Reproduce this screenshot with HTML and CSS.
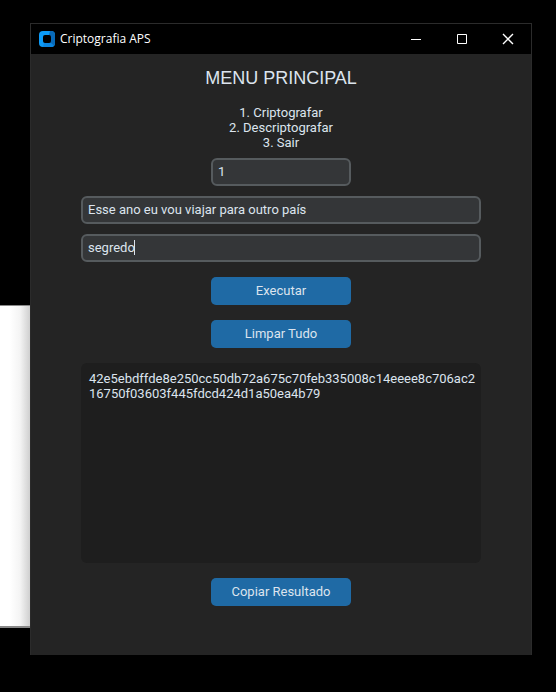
FILE: index.html
```html
<!DOCTYPE html>
<html lang="pt-BR">
<head>
<meta charset="utf-8">
<meta name="viewport" content="width=device-width, initial-scale=1">
<title>Criptografia APS</title>
<link rel="stylesheet" href="styles.css">
</head>
<body>
<div class="backdrop"></div>
<div class="window">
  <header class="titlebar">
    <svg class="app-icon" viewBox="0 0 16 16" aria-hidden="true">
      <rect width="16" height="16" rx="4" fill="#0c9bf8"/>
      <path fill="#0869b8" d="M11 0H12Q16 0 16 4V12Q16 16 12 16L10 12V4Z"/>
      <path fill="#0c86e0" d="M5 12H12L15 14.500Q14 16 12 16H4Z"/>
      <rect x="4" y="4" width="8" height="8" rx="2" fill="#000"/>
    </svg>
    <span class="title">Criptografia APS</span>
    <button class="control" type="button" aria-label="Minimizar">
      <svg viewBox="0 0 10 10"><path d="M0 5.500H10"/></svg>
    </button>
    <button class="control" type="button" aria-label="Maximizar">
      <svg viewBox="0 0 10 10"><path d="M.5.500H9.500V9.500H.5Z"/></svg>
    </button>
    <button class="control" type="button" aria-label="Fechar">
      <svg viewBox="0 0 10 10"><path class="cross" d="M0 0L10 10M10 0L0 10"/></svg>
    </button>
  </header>
  <main class="content">
    <h1 class="heading">MENU PRINCIPAL</h1>
    <p class="menu">1. Criptografar<br>2. Descriptografar<br>3. Sair</p>
    <input class="field field-short" type="text" value="1" aria-label="Opção">
    <input class="field" type="text" value="Esse ano eu vou viajar para outro país" aria-label="Mensagem">
    <div class="caret-field">
      <input class="field" type="text" value="segredo" aria-label="Chave">
      <span class="caret"></span>
    </div>
    <button class="action" type="button">Executar</button>
    <button class="action" type="button">Limpar Tudo</button>
    <textarea class="result" aria-label="Resultado">42e5ebdffde8e250cc50db72a675c70feb335008c14eeee8c706ac216750f03603f445fdcd424d1a50ea4b79</textarea>
    <button class="action" type="button">Copiar Resultado</button>
  </main>
</div>
</body>
</html>
```
FILE: styles.css
```css
* {
  box-sizing: border-box;
}

body {
  display: flex;
  min-height: 100vh;
  margin: 0;
  padding: 23px 24px 37px 30px;
  background: #000;
  color: #dce4ee;
  font: 13px/15px Roboto, sans-serif;
}

.backdrop {
  position: absolute;
  top: 305px;
  bottom: 64px;
  left: 0;
  width: 30px;
  border: solid #888;
  border-width: 1px 0 2px;
  background: linear-gradient(to right, #fff 10px, #f4f4f4 20px, #cfcfcf);
}

.window {
  position: relative;
  display: flex;
  flex: 1;
  flex-direction: column;
  min-width: 0;
  border: 1px solid #2b2b2b;
  border-bottom: 0;
  background: #242424;
}

.titlebar {
  display: flex;
  align-items: center;
  height: 30px;
  padding-left: 8px;
  background: #000;
}

.app-icon {
  width: 16px;
  height: 16px;
}

.title {
  flex: 1;
  margin-left: 5px;
  color: #fff;
  font: 12px/16px "Open Sans", sans-serif;
}

.control {
  display: grid;
  place-items: center;
  width: 46px;
  height: 30px;
  padding: 0;
  border: 0;
  background: none;
}

.control svg {
  width: 10px;
  height: 10px;
  overflow: visible;
  fill: none;
  stroke: #fff;
}

.control .cross {
  stroke-width: 1.4;
}

.content {
  display: flex;
  flex: 1;
  flex-direction: column;
  align-items: center;
  padding: 10px 50px 0;
}

.heading {
  margin: 0;
  font: 18px/28px "Liberation Sans", sans-serif;
}

.menu {
  margin: 13px 0 8px;
  text-align: center;
}

.field {
  width: 100%;
  height: 28px;
  margin-bottom: 10px;
  padding: 0 5px 2px;
  border: 2px solid #565b5e;
  border-radius: 6px;
  outline: 0;
  background: #343638;
  color: #dce4ee;
  font: inherit;
}

.field-short {
  width: 140px;
}

.caret-field {
  position: relative;
  width: 100%;
  margin-bottom: 5px;
}

.caret-field .field {
  display: block;
}

.caret {
  position: absolute;
  top: 6px;
  left: 53px;
  width: 1px;
  height: 15px;
  background: #dce4ee;
}

.action {
  width: 140px;
  height: 28px;
  margin-bottom: 15px;
  padding: 0 0 2px;
  border: 0;
  border-radius: 5px;
  background: #1f6aa5;
  color: #dce4ee;
  font: inherit;
}

.result {
  width: 100%;
  height: 200px;
  margin-bottom: 15px;
  padding: 8px 4px 8px 8px;
  border: 0;
  border-radius: 6px;
  outline: 0;
  resize: none;
  background: #1e1e1e;
  color: #dce4ee;
  font: inherit;
  word-break: break-all;
}
```
